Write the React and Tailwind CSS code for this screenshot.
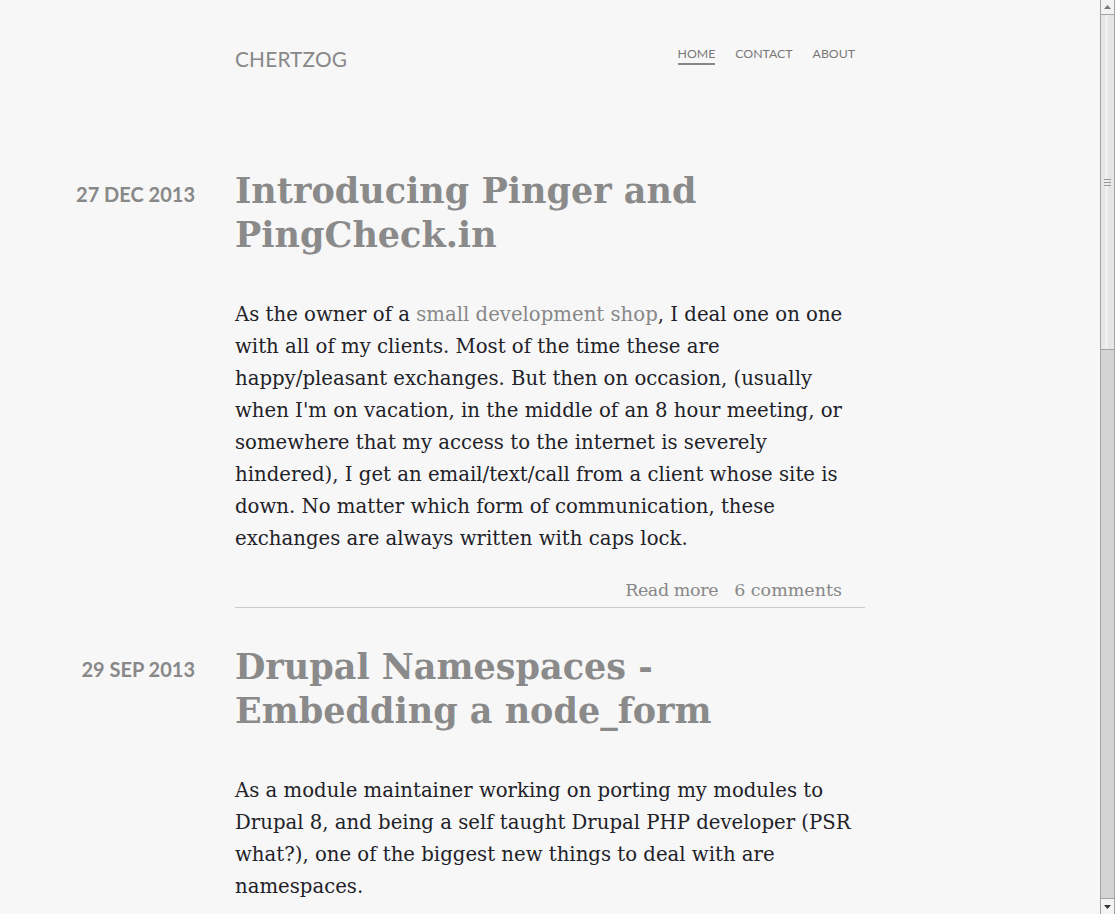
import React from "react";

const serif = { fontFamily: '"DejaVu Serif", serif' };

function Article({ date, titleLines, bodyLines, footer, first }) {
  return (
    <article className={first ? "pt-0" : "pt-[37px]"}>
      <div className="flex">
        <div className={`w-[160px] -ml-[200px] mr-[40px] shrink-0 text-right ${first ? "pt-[10px]" : "pt-[9px]"} font-['Lato',sans-serif] font-bold text-[20px] leading-[30px] text-[#888]`}>
          {date}
        </div>
        <div className="flex-1 min-w-0">
          <h2 className="text-[35px] leading-[44px] font-bold text-[#8a8a8a] whitespace-nowrap" style={serif}>
            {titleLines.map((l, i) => (
              <div key={i}>{l}</div>
            ))}
          </h2>
          <div className="mt-[42px] text-[19.7px] leading-[32px] text-[#222228] whitespace-nowrap" style={serif}>
            {bodyLines.map((l, i) => (
              <div key={i}>{l}</div>
            ))}
          </div>
          {footer && (
            <div className="mt-[21px] pb-[3px] border-b border-[#cccccc] flex justify-end gap-[16px] pr-[23px] text-[17.5px] leading-[28px] text-[#888]" style={serif}>
              <span className="tracking-[-0.4px]">Read more</span>
              <span>6 comments</span>
            </div>
          )}
        </div>
      </div>
    </article>
  );
}

function Scrollbar() {
  return (
    <div className="w-[15px] h-full shrink-0 flex flex-col border-x border-[#a3a3a3] bg-[#d4d4d4]">
      <div className="h-[15px] bg-[#f3f3f3] border-b border-[#a3a3a3] flex items-center justify-center">
        <svg width="7" height="4" viewBox="0 0 7 4"><path d="M0 4 L3.5 0 L7 4 Z" fill="#777" /></svg>
      </div>
      <div className="h-[335px] bg-[#e6e6e6] border-b border-[#a3a3a3] flex items-center justify-center relative">
        <div className="absolute left-[4px] top-0 bottom-0 w-[3px] bg-[#efefef]" />
        <div className="relative flex flex-col gap-[2px]">
          <div className="w-[7px] h-px bg-[#999]" />
          <div className="w-[7px] h-px bg-[#999]" />
          <div className="w-[7px] h-px bg-[#999]" />
        </div>
      </div>
      <div className="flex-1" />
      <div className="h-[16px] bg-[#f3f3f3] border-t border-[#a3a3a3] flex items-center justify-center">
        <svg width="7" height="4" viewBox="0 0 7 4"><path d="M0 0 L3.5 4 L7 0 Z" fill="#333" /></svg>
      </div>
    </div>
  );
}

export default function App() {
  return (
    <div className="h-[914px] w-full flex overflow-hidden bg-[#f7f7f7]">
      <div className="flex-1 min-w-0">
        <div className="w-[630px] mx-auto">
          <header className="flex justify-between items-start pt-[44px]">
            <div className="font-['Lato',sans-serif] text-[20.8px] leading-[30px] text-[#888] tracking-[0.2px]">CHERTZOG</div>
            <nav className="flex gap-[20px] pr-[10px] pt-[1px] font-['Lato',sans-serif] text-[12.3px] leading-[18px] text-[#777]">
              <span className="border-b-2 border-[#888]">HOME</span>
              <span>CONTACT</span>
              <span>ABOUT</span>
            </nav>
          </header>
          <main className="mt-[95px]">
            <Article
              first
              date="27 DEC 2013"
              titleLines={["Introducing Pinger and", "PingCheck.in"]}
              bodyLines={[
                <>As the owner of a <a className="text-[#888]">small development shop</a>, I deal one on one</>,
                "with all of my clients. Most of the time these are",
                "happy/pleasant exchanges. But then on occasion, (usually",
                "when I'm on vacation, in the middle of an 8 hour meeting, or",
                "somewhere that my access to the internet is severely",
                "hindered), I get an email/text/call from a client whose site is",
                "down. No matter which form of communication, these",
                "exchanges are always written with caps lock.",
              ]}
              footer
            />
            <Article
              date="29 SEP 2013"
              titleLines={["Drupal Namespaces -", "Embedding a node_form"]}
              bodyLines={[
                "As a module maintainer working on porting my modules to",
                "Drupal 8, and being a self taught Drupal PHP developer (PSR",
                "what?), one of the biggest new things to deal with are",
                "namespaces.",
              ]}
            />
          </main>
        </div>
      </div>
      <Scrollbar />
    </div>
  );
}
